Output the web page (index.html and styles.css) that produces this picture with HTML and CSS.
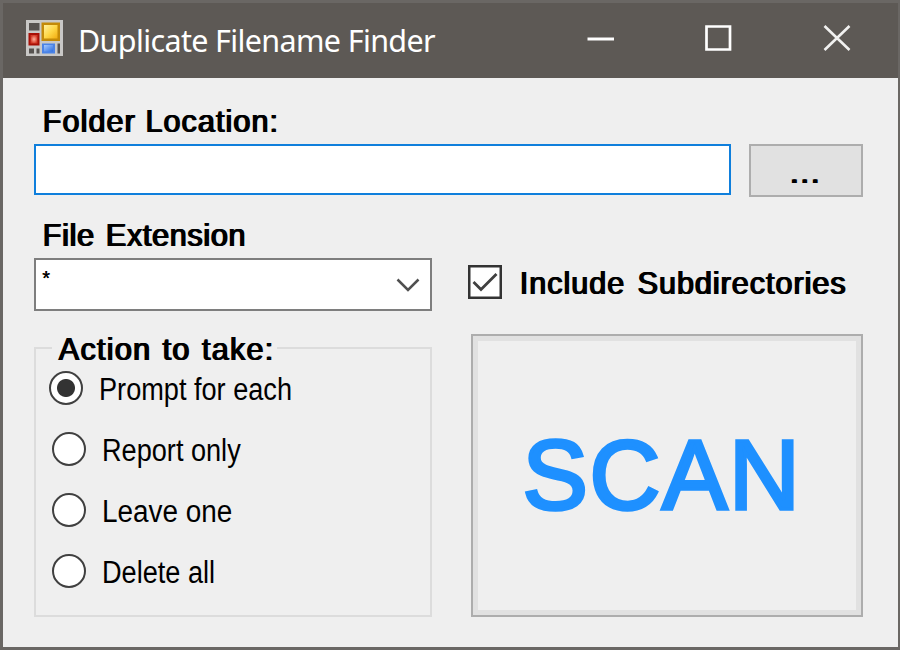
FILE: index.html
```html
<!DOCTYPE html>
<html lang="en">
<head>
<meta charset="utf-8">
<title>Duplicate Filename Finder</title>
<link rel="stylesheet" href="styles.css">
</head>
<body>
<div class="window">
  <header class="titlebar">
    <svg class="app-icon" width="37" height="36" viewBox="0 0 37 36">
      <defs>
        <linearGradient id="gold" x1="0" y1="0" x2="1" y2="1"><stop offset="0" stop-color="#fff0a0"/><stop offset=".5" stop-color="#ffd848"/><stop offset="1" stop-color="#f2ac10"/></linearGradient>
        <linearGradient id="blue" x1="0" y1="0" x2="1" y2="1"><stop offset="0" stop-color="#a4c9ff"/><stop offset="1" stop-color="#2f6fe0"/></linearGradient>
        <radialGradient id="red"><stop offset="0" stop-color="#ffb09c"/><stop offset="1" stop-color="#d43a28"/></radialGradient>
      </defs>
      <rect width="37" height="36" fill="#c9c8c6"/>
      <rect x="3" y="3" width="10.5" height="7.500" fill="#575350"/>
      <rect x="2.500" y="13" width="11" height="12.500" fill="#a80f06"/>
      <rect x="4.500" y="15" width="7" height="8.500" fill="url(#red)"/>
      <rect x="15.500" y="2.500" width="18.500" height="18.500" fill="#c48a08"/>
      <rect x="18" y="5" width="13.500" height="13.500" fill="url(#gold)"/>
      <rect x="16" y="23.500" width="13" height="10" fill="#4b83e6"/>
      <rect x="18" y="25" width="9" height="6.500" fill="url(#blue)"/>
      <rect x="31.500" y="23.500" width="2.500" height="10" fill="#575350"/>
      <rect x="3" y="28.500" width="5" height="5" fill="#575350"/>
      <rect x="10.500" y="28.500" width="3" height="5" fill="#575350"/>
    </svg>
    <h1 class="title">Duplicate Filename Finder</h1>
    <div class="controls">
      <svg width="28" height="28" viewBox="0 0 28 28"><path d="M.5 15H27" stroke="#fff" stroke-width="3" fill="none"/></svg>
      <svg width="28" height="28" viewBox="0 0 28 28"><path d="M1.500 2.500H25V25.500H1.500Z" stroke="#fff" stroke-width="2.700" fill="none"/></svg>
      <svg width="28" height="28" viewBox="0 0 28 28"><path d="M1.500 2L26.500 26M26.500 2L1.500 26" stroke="#f1f1f0" stroke-width="2.600" fill="none"/></svg>
    </div>
  </header>
  <main class="content">
    <div class="label label-folder">Folder Location:</div>
    <div class="folder-row">
      <div class="textbox"></div>
      <div class="browse">...</div>
    </div>
    <div class="columns">
      <section class="left">
        <div class="label label-extension">File Extension</div>
        <div class="combo">
          <span class="combo-value">*</span>
          <svg width="24" height="14" viewBox="0 0 24 14"><path d="M1.500 1.500L12 12L22.500 1.500" stroke="#505050" stroke-width="2.500" fill="none"/></svg>
        </div>
        <fieldset class="group">
          <legend class="label legend">Action to take:</legend>
          <div class="option selected"><i class="radio"></i><span class="text prompt">Prompt for each</span></div>
          <div class="option"><i class="radio"></i><span class="text report">Report only</span></div>
          <div class="option"><i class="radio"></i><span class="text leave">Leave one</span></div>
          <div class="option"><i class="radio"></i><span class="text delete">Delete all</span></div>
        </fieldset>
      </section>
      <section class="right">
        <div class="check-row">
          <svg width="34" height="34" viewBox="0 0 34 34"><rect x="1.250" y="1.250" width="31.500" height="31.500" fill="#fff" stroke="#333" stroke-width="2.500"/><path d="M5.500 17L13 24.500L28.500 9" stroke="#404040" stroke-width="2.800" fill="none"/></svg>
          <span class="label label-include">Include Subdirectories</span>
        </div>
        <div class="scan"><span class="scan-text">SCAN</span></div>
      </section>
    </div>
  </main>
</div>
</body>
</html>
```
FILE: styles.css
```css
* { box-sizing: border-box; }
body { margin: 0; }
.window {
  width: 900px;
  height: 650px;
  border: 3px solid #6a6764;
  border-right-width: 2px;
  background: #efefef;
  font-family: "Liberation Sans", Arial, sans-serif;
  color: #000;
  overflow: hidden;
}
.titlebar {
  display: flex;
  align-items: center;
  height: 75px;
  padding: 0 47px 5px 23px;
  background: #5d5955;
}
.title {
  margin: 3px 0 0 15px;
  font: 400 30.5px/36px "Noto Sans", "Open Sans", sans-serif;
  letter-spacing: -.64px;
  white-space: nowrap;
  color: #fff;
}
.controls { display: flex; gap: 90px; margin-left: auto; }
.content { padding: 0 35px 0 31px; }
.label {
  font-size: 30.5px;
  line-height: 32px;
  white-space: nowrap;
  text-shadow: .8px 0 #000, 1.6px 0 #000;
}
.label-folder { height: 66px; padding: 27px 0 0 8px; letter-spacing: 1.1px; word-spacing: 0; }
.folder-row { display: flex; justify-content: space-between; height: 51px; }
.textbox { width: 697px; height: 51px; background: #fff; border: 2.5px solid #0f7fdc; }
.browse {
  width: 114px;
  height: 53px;
  background: #e1e1e1;
  border: 2px solid #adadad;
  text-align: center;
  font-size: 34px;
  line-height: 51px;
  text-indent: -3px;
  letter-spacing: 1px;
  text-shadow: .8px 0 #000, 1.6px 0 #000;
}
.columns { display: grid; grid-template-columns: 398px 392px; gap: 39px; }
.label-extension { height: 63px; padding: 24px 0 0 8px; letter-spacing: .7px; word-spacing: 2px; }
.combo {
  display: flex;
  justify-content: space-between;
  align-items: center;
  height: 53px;
  padding: 0 10px 0 6px;
  background: #fff;
  border: 2px solid #7e7e7e;
}
.combo-value { align-self: flex-start; font-size: 20px; line-height: 32px; margin-top: 2px; text-shadow: .5px 0 #000; }
.group {
  height: 285px;
  margin: 21px 0 0;
  padding: 0 0 0 14px;
  border: 2px solid #dcdcdc;
  min-width: 0;
}
.legend { height: 32px; margin-left: 2px; padding: 1px 3px 0 6px; letter-spacing: 1.3px; word-spacing: 1.5px; }
.option { display: flex; align-items: center; height: 34px; margin: 0 0 27px 2px; }
.option.selected { margin: 7px 0 27px -1px; }
.radio { width: 34px; height: 34px; border: 2.5px solid #404040; border-radius: 50%; background: #fff; }
.selected .radio { background: radial-gradient(circle, #333 8.500px, #fff 9.500px); }
.text { margin: 3px 0 0 16px; font-size: 31px; line-height: 32px; white-space: nowrap; transform-origin: left; transform: scaleX(.875); }
.leave { transform: scaleX(.9); }
.right { padding-top: 70px; }
.check-row { display: flex; align-items: center; height: 34px; margin-left: -3px; }
.label-include { margin: 2px 0 0 17px; letter-spacing: 1px; word-spacing: 3px; }
.scan {
  display: flex;
  justify-content: center;
  height: 283px;
  margin-top: 35px;
  border: 2px solid #adadad;
  box-shadow: inset 0 0 0 5px #e1e1e1;
}
.scan-text {
  margin: 82px 10px 0 0;
  font-size: 98px;
  line-height: 115px;
  letter-spacing: 1.7px;
  color: #1e90ff;
  -webkit-text-stroke: 3.500px #1e90ff;
}
```
